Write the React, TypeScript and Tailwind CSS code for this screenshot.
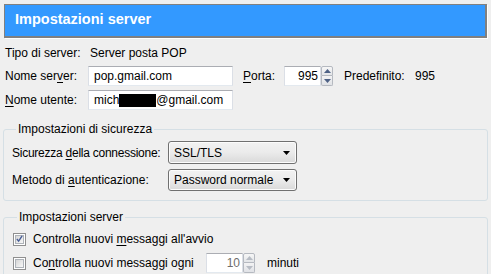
import React from 'react'

function U({ children }: { children: React.ReactNode }) {
  return <span className="underline underline-offset-[2px]">{children}</span>
}

function TextBox({ children, className = '' }: { children: React.ReactNode; className?: string }) {
  return (
    <div
      className={`h-[20px] bg-white border border-t-[#abadb3] border-x-[#dbdfe6] border-b-[#e3e9ef] pl-[5px] leading-[18px] flex items-center ${className}`}
    >
      {children}
    </div>
  )
}

function Spinner({ value, disabled = false }: { value: string; disabled?: boolean }) {
  const arrow = disabled ? '#b7bcc4' : '#4d6185'
  return (
    <div className="flex h-[20px]">
      <div
        className={`w-[37px] bg-white border border-t-[#abadb3] border-x-[#dbdfe6] border-b-[#e3e9ef] text-right pr-[2px] leading-[18px] ${
          disabled ? 'text-[#6d6d6d]' : 'text-black'
        }`}
      >
        {value}
      </div>
      <div className="flex flex-col w-[12px]">
        <div className="h-[10px] border border-[#b5b9c0] rounded-t-[2px] bg-gradient-to-b from-[#f7f7f7] to-[#e3e5e8] flex items-center justify-center">
          <svg width="7" height="4" viewBox="0 0 7 4">
            <path d="M0 4 L3.5 0 L7 4 Z" fill={arrow} />
          </svg>
        </div>
        <div className="h-[10px] border border-t-0 border-[#b5b9c0] rounded-b-[2px] bg-gradient-to-b from-[#f3f3f4] to-[#e0e2e6] flex items-center justify-center">
          <svg width="7" height="4" viewBox="0 0 7 4">
            <path d="M0 0 L7 0 L3.5 4 Z" fill={arrow} />
          </svg>
        </div>
      </div>
    </div>
  )
}

function Select({ value, h }: { value: string; h: string }) {
  return (
    <div
      className={`w-[129px] ${h} border border-[#707070] rounded-[3px] bg-gradient-to-b from-[#f2f2f2] via-[#ebebeb] to-[#d9d9d9] shadow-[inset_0_0_0_1px_#fcfcfc] flex items-center pl-[5px] pr-[6px]`}
    >
      <span className="flex-1">{value}</span>
      <svg width="7" height="4" viewBox="0 0 7 4">
        <path d="M0 0 L7 0 L3.5 4 Z" fill="#000" />
      </svg>
    </div>
  )
}

function Checkbox({ checked }: { checked: boolean }) {
  return (
    <div className="w-[13px] h-[13px] border border-[#8f8f8f] bg-white p-[1px]">
      <div className="w-full h-full border border-[#aeb3b9] bg-gradient-to-br from-[#d6d6d6] to-[#f8f8f8] flex items-center justify-center">
        {checked && (
          <svg width="8" height="8" viewBox="0 0 8 8">
            <path d="M1 4 L3 6.5 L7 0.5" stroke="#4a5f97" strokeWidth="1.6" fill="none" />
          </svg>
        )}
      </div>
    </div>
  )
}

export default function App() {
  return (
    <div className="w-[491px] h-[274px] overflow-hidden bg-[#efefef] text-[12px] text-black font-['Liberation_Sans',Arial,sans-serif]">
      {/* Header bar */}
      <div className="pt-[4px] pl-[4px] pr-[4px]">
        <div className="h-[34px] border-t border-l border-r-2 border-b-2 border-[#808080] bg-[#3399ff] shadow-[1px_1px_0_#ffffff] flex items-center pl-[10px] pb-[1px]">
          <span className="text-white font-bold text-[14.5px]">Impostazioni server</span>
        </div>
      </div>

      {/* Server fields */}
      <div className="pl-[5px] pt-[5px] flex flex-col">
        <div className="h-[20px] flex items-center">
          <span className="w-[85px]">Tipo di server:</span>
          <span>Server posta POP</span>
        </div>
        <div className="h-[20px] mt-[3px] flex items-center">
          <span className="w-[83px]">
            Nome ser<U>v</U>er:
          </span>
          <TextBox className="w-[145px]">pop.gmail.com</TextBox>
          <span className="ml-[10px] w-[41px]">
            <U>P</U>orta:
          </span>
          <Spinner value="995" />
          <span className="ml-[11px] w-[71px]">Predefinito:</span>
          <span>995</span>
        </div>
        <div className="h-[20px] mt-[4px] flex items-center">
          <span className="w-[83px]">
            <U>N</U>ome utente:
          </span>
          <TextBox className="w-[145px]">
            mich<span className="inline-block w-[37px] h-[13px] bg-black" />@gmail.com
          </TextBox>
        </div>
      </div>

      {/* Security group */}
      <fieldset className="mx-[3px] mt-[12px] border border-[#d5dfe5] rounded-[3px] pl-[8px] pb-[9px]">
        <legend className="ml-[4px] px-[2px] leading-[15px]">Impostazioni di sicurezza</legend>
        <div className="flex flex-col gap-[5px] pt-[4px]">
          <div className="flex items-center">
            <span className="w-[156px] tracking-[-0.25px]">
              Sicurezza <U>d</U>ella connessione:
            </span>
            <Select value="SSL/TLS" h="h-[23px]" />
          </div>
          <div className="flex items-center">
            <span className="w-[156px]">
              Metodo di <U>a</U>utenticazione:
            </span>
            <Select value="Password normale" h="h-[22px]" />
          </div>
        </div>
      </fieldset>

      {/* Server settings group */}
      <fieldset className="mx-[3px] mt-[9px] border border-[#d5dfe5] rounded-[3px] pl-[9px] pb-[10px]">
        <legend className="ml-[4px] px-[2px] leading-[15px]">Impostazioni server</legend>
        <div className="flex flex-col pt-[7px]">
          <div className="h-[14px] flex items-center gap-[7px]">
            <Checkbox checked />
            <span>
              Controlla nuovi <U>m</U>essaggi all'avvio
            </span>
          </div>
          <div className="h-[24px] mt-[5px] flex items-center">
            <Checkbox checked={false} />
            <span className="ml-[7px] w-[173px]">
              Co<U>n</U>trolla nuovi messaggi ogni
            </span>
            <Spinner value="10" disabled />
            <span className="ml-[12px]">minuti</span>
          </div>
        </div>
      </fieldset>
    </div>
  )
}
